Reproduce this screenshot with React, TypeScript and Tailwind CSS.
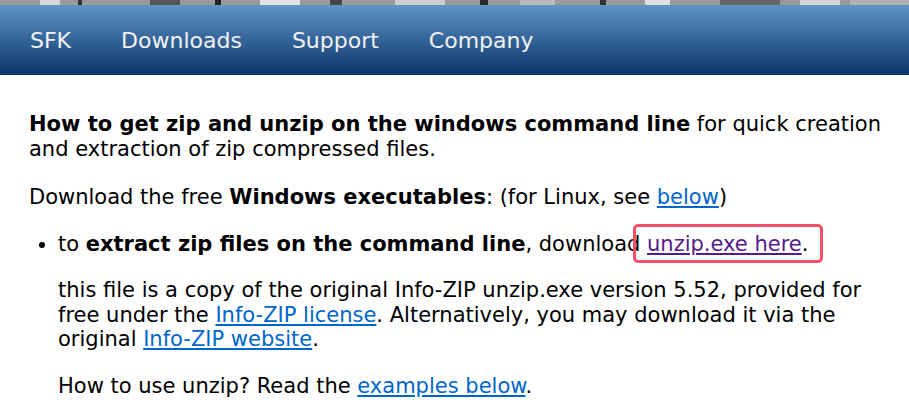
export default function App() {
  const font = { fontFamily: '"DejaVu Sans", Verdana, sans-serif' };

  return (
    <div className="w-[909px] h-[408px] overflow-hidden bg-white text-black" style={font}>
      {/* strip of the header photo */}
      <svg width="909" height="5" className="block">
        <rect width="909" height="5" fill="#9a9a9a" />
        <rect x="40" width="20" height="5" fill="#d8d8d8" />
        <rect x="78" width="4" height="5" fill="#333" />
        <rect x="150" width="30" height="5" fill="#555" />
        <rect x="215" width="6" height="5" fill="#222" />
        <rect x="260" width="40" height="5" fill="#e4e4e4" />
        <rect x="330" width="12" height="5" fill="#444" />
        <rect x="395" width="50" height="5" fill="#cfcfcf" />
        <rect x="480" width="8" height="5" fill="#2a2a2a" />
        <rect x="520" width="35" height="5" fill="#bbb" />
        <rect x="600" width="6" height="5" fill="#333" />
        <rect x="645" width="25" height="5" fill="#e0e0e0" />
        <rect x="720" width="60" height="5" fill="#666" />
        <rect x="800" width="40" height="5" fill="#d5d5d5" />
        <rect x="850" width="59" height="5" fill="#b0b0b0" />
      </svg>

      <nav className="h-[70px] flex items-center pl-[5px] bg-gradient-to-b from-[#5f95ca] to-[#0a3569] text-[#f2f2f2] text-[22px]">
        <a className="px-[25px]">SFK</a>
        <a className="px-[25px]">Downloads</a>
        <a className="px-[25px]">Support</a>
        <a className="px-[25px]">Company</a>
      </nav>

      <div className="pl-[29px] pr-[20px] pt-[37px] text-[21px] leading-[24.5px]">
        <p>
          <b>How to get zip and unzip on the windows command line</b> for quick creation and extraction of zip
          compressed files.
        </p>
        <p className="mt-[24px]">
          Download the free <b>Windows executables</b>: (for Linux, see{" "}
          <a className="text-[#0066cc] underline">below</a>)
        </p>
        <ul className="mt-[22px] list-disc pl-[29px]">
          <li>
            <p>
              to <b>extract zip files on the command line</b>, download{" "}
              <span className="relative">
                <a className="text-[#551a8b] underline">unzip.exe here</a>.
                <span className="absolute -left-[14px] -right-[15px] -top-[8px] -bottom-[7px] border-[3px] border-[#f4506a] rounded-[5px]" />
              </span>
            </p>
            <p className="mt-[22px]">
              this file is a copy of the original Info-ZIP unzip.exe version 5.52, provided for free under the{" "}
              <a className="text-[#0066cc] underline">Info-ZIP license</a>. Alternatively, you may download it via
              the original <a className="text-[#0066cc] underline">Info-ZIP website</a>.
            </p>
            <p className="mt-[22px]">
              How to use unzip? Read the <a className="text-[#0066cc] underline">examples below</a>.
            </p>
          </li>
        </ul>
      </div>
    </div>
  );
}
